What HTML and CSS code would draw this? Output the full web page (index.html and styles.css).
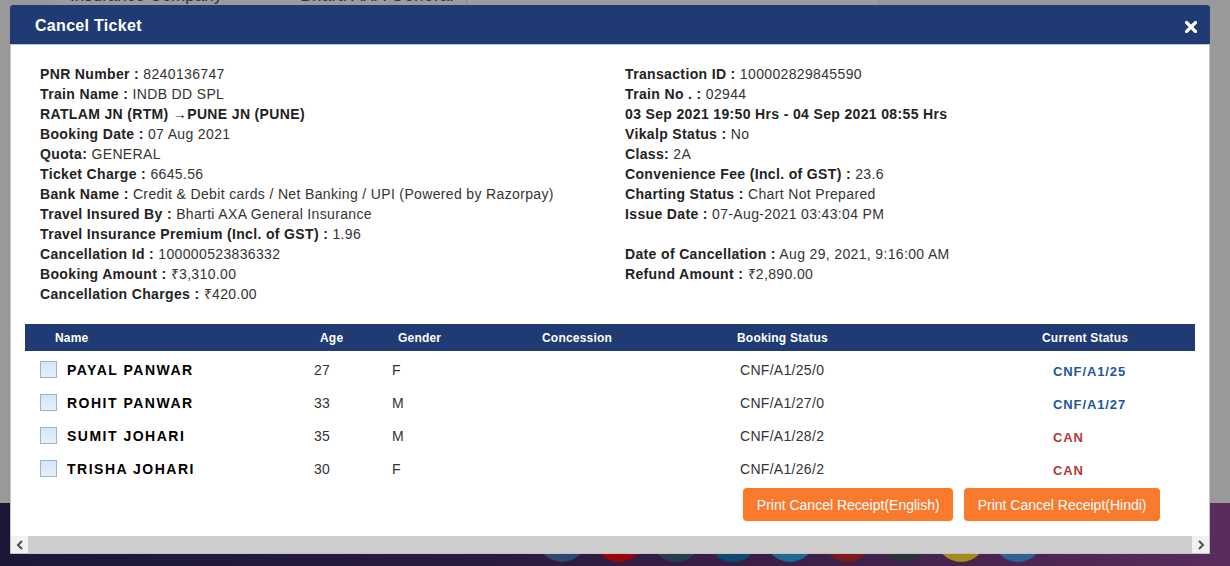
FILE: index.html
```html
<!DOCTYPE html>
<html>
<head>
<meta charset="utf-8">
<title>Cancel Ticket</title>
<link rel="stylesheet" href="styles.css">
</head>
<body>
<div class="backdrop">
  <div class="bg-top">
    <div class="bg-table">
      <div class="bg-cell bg-cell-a"><span>Insurance Company</span><span class="bg-val">Bharti AXA General</span></div>
      <div class="bg-cell bg-cell-b"></div>
    </div>
  </div>
  <div class="bg-bottom">
    <div class="circles">
      <span class="circle c1"></span><span class="circle c2"></span><span class="circle c3"></span>
      <span class="circle c4"></span><span class="circle c5"></span><span class="circle c6"></span>
      <span class="circle c7"></span><span class="circle c8"></span><span class="circle c9"></span>
    </div>
  </div>
</div>

<div class="modal">
  <div class="modal-header">
    <h4 class="modal-title">Cancel Ticket</h4>
    <button class="close" aria-label="Close">
      <svg width="12" height="12" viewBox="0 0 12 12"><path d="M1.5 1.5 L10.5 10.5 M10.5 1.5 L1.5 10.5" stroke="#fff" stroke-width="3.2" stroke-linecap="square"/></svg>
    </button>
  </div>
  <div class="modal-body">
    <div class="details">
      <div class="col">
        <div class="line"><b>PNR Number :</b> 8240136747</div>
        <div class="line"><b>Train Name :</b> INDB DD SPL</div>
        <div class="line"><b>RATLAM JN (RTM) →PUNE JN (PUNE)</b></div>
        <div class="line"><b>Booking Date :</b> 07 Aug 2021</div>
        <div class="line"><b>Quota:</b> GENERAL</div>
        <div class="line"><b>Ticket Charge :</b> 6645.56</div>
        <div class="line"><b>Bank Name :</b> Credit &amp; Debit cards / Net Banking / UPI (Powered by Razorpay)</div>
        <div class="line"><b>Travel Insured By :</b> Bharti AXA General Insurance</div>
        <div class="line"><b>Travel Insurance Premium (Incl. of GST) :</b> 1.96</div>
        <div class="line"><b>Cancellation Id :</b> 100000523836332</div>
        <div class="line"><b>Booking Amount :</b> ₹3,310.00</div>
        <div class="line"><b>Cancellation Charges :</b> ₹420.00</div>
      </div>
      <div class="col">
        <div class="line"><b>Transaction ID :</b> 100002829845590</div>
        <div class="line"><b>Train No . :</b> 02944</div>
        <div class="line"><b>03 Sep 2021 19:50 Hrs - 04 Sep 2021 08:55 Hrs</b></div>
        <div class="line"><b>Vikalp Status :</b> No</div>
        <div class="line"><b>Class:</b> 2A</div>
        <div class="line"><b>Convenience Fee (Incl. of GST) :</b> 23.6</div>
        <div class="line"><b>Charting Status :</b> Chart Not Prepared</div>
        <div class="line"><b>Issue Date :</b> 07-Aug-2021 03:43:04 PM</div>
        <div class="line"></div>
        <div class="line"><b>Date of Cancellation :</b> Aug 29, 2021, 9:16:00 AM</div>
        <div class="line"><b>Refund Amount :</b> ₹2,890.00</div>
      </div>
    </div>

    <div class="ptable">
      <div class="prow phead">
        <div class="h-name">Name</div>
        <div class="h-age">Age</div>
        <div class="h-gender">Gender</div>
        <div class="h-conc">Concession</div>
        <div class="h-book">Booking Status</div>
        <div class="h-cur">Current Status</div>
      </div>
      <div class="pbody">
        <div class="prow">
          <div class="d-name"><span class="chk"></span><span class="pname">PAYAL PANWAR</span></div>
          <div class="d-age">27</div><div class="d-gender">F</div><div class="d-conc"></div>
          <div class="d-book">CNF/A1/25/0</div><div class="d-cur cnf">CNF/A1/25</div>
        </div>
        <div class="prow">
          <div class="d-name"><span class="chk"></span><span class="pname">ROHIT PANWAR</span></div>
          <div class="d-age">33</div><div class="d-gender">M</div><div class="d-conc"></div>
          <div class="d-book">CNF/A1/27/0</div><div class="d-cur cnf">CNF/A1/27</div>
        </div>
        <div class="prow">
          <div class="d-name"><span class="chk"></span><span class="pname">SUMIT JOHARI</span></div>
          <div class="d-age">35</div><div class="d-gender">M</div><div class="d-conc"></div>
          <div class="d-book">CNF/A1/28/2</div><div class="d-cur can">CAN</div>
        </div>
        <div class="prow">
          <div class="d-name"><span class="chk"></span><span class="pname">TRISHA JOHARI</span></div>
          <div class="d-age">30</div><div class="d-gender">F</div><div class="d-conc"></div>
          <div class="d-book">CNF/A1/26/2</div><div class="d-cur can">CAN</div>
        </div>
      </div>
    </div>

    <div class="actions">
      <button class="btn">Print Cancel Receipt(English)</button>
      <button class="btn">Print Cancel Receipt(Hindi)</button>
    </div>
  </div>
  <div class="hscroll">
    <span class="sb-btn">
      <svg width="8" height="10" viewBox="0 0 8 10"><path d="M6 1 L2 5 L6 9" fill="none" stroke="#505050" stroke-width="2"/></svg>
    </span>
    <span class="sb-track"></span>
    <span class="sb-btn">
      <svg width="8" height="10" viewBox="0 0 8 10"><path d="M2 1 L6 5 L2 9" fill="none" stroke="#505050" stroke-width="2"/></svg>
    </span>
  </div>
</div>
</body>
</html>
```

FILE: styles.css
```css
* { box-sizing: border-box; }

html, body {
  margin: 0;
  padding: 0;
  width: 1230px;
  height: 566px;
  overflow: hidden;
  font-family: "Liberation Sans", Arial, sans-serif;
}

/* ---------- page behind the dialog ---------- */
.backdrop {
  display: flex;
  flex-direction: column;
  height: 566px;
}
.bg-top {
  height: 503px;
  background: #999999;
  overflow: hidden;
}
.bg-table {
  display: flex;
  margin: -17px 0 0 55px;
  width: 824px;
  height: 40px;
}
.bg-cell {
  height: 40px;
  background: #9c9c9c;
  border-right: 1px solid #8a8a8a;
  font-size: 17px;
  line-height: 26px;
  color: #303048;
}
.bg-cell-a {
  width: 412px;
  display: flex;
  gap: 78px;
  padding-left: 15px;
}
.bg-val { letter-spacing: 0.4px; }
.bg-cell-b { width: 412px; }

.bg-bottom {
  flex: 1;
  background: linear-gradient(90deg, #1b1836 0%, #2a1a3e 40%, #3f2149 70%, #5a2c5b 100%);
  overflow: hidden;
}
.circles {
  display: flex;
  gap: 7px;
  margin: 9px 0 0 537px;
}
.circle {
  width: 50px;
  height: 50px;
  border-radius: 50%;
  flex: none;
}
.c1 { background: #2e4674; }
.c2 { background: #9a0406; }
.c3 { background: #22404f; }
.c4 { background: #0b4b74; }
.c5 { background: #1c6a93; }
.c6 { background: #791a1c; }
.c7 { background: #26343d; }
.c8 { background: #a7891d; }
.c9 { background: #2f6396; }

/* ---------- dialog ---------- */
.modal {
  position: absolute;
  top: 5px;
  left: 10px;
  width: 1200px;
  height: 549px;
  background: #fff;
  border: 1px solid #c4c4c4;
  border-radius: 3px 3px 0 0;
  display: flex;
  flex-direction: column;
}
.modal-header {
  height: 40px;
  flex: none;
  background: #203b74;
  border-bottom: 1px solid #b9c3d6;
  display: flex;
  align-items: center;
  justify-content: space-between;
  padding: 2px 13px 0 25px;
  margin: -1px -1px 0 -1px;
  border-radius: 3px 3px 0 0;
}
.modal-title {
  margin: 0;
  color: #fff;
  font-size: 16px;
  font-weight: bold;
  letter-spacing: 0.3px;
}
.close {
  background: none;
  border: 0;
  padding: 0;
  width: 12px;
  height: 12px;
  margin-top: 2px;
  display: flex;
}

.modal-body {
  flex: 1;
  padding: 19px 14px 0 14px;
}

.details {
  display: grid;
  grid-template-columns: 585px 1fr;
  padding-left: 15px;
  font-size: 14px;
  letter-spacing: 0.35px;
  color: #333;
}
.line {
  height: 20px;
  line-height: 20px;
  white-space: nowrap;
}
.line b {
  color: #222;
}

/* ---------- passenger table ---------- */
.ptable {
  margin-top: 20px;
  width: 1170px;
}
.prow {
  display: grid;
  grid-template-columns: 289px 78px 150px 195px 305px 153px;
  align-items: center;
}
.phead {
  height: 27px;
  background: #203b74;
  color: #fff;
  font-size: 12px;
  font-weight: bold;
  letter-spacing: 0.2px;
}
.h-name { padding-left: 30px; }
.h-age, .h-gender { padding-left: 6px; }
.pbody { padding-top: 2px; }
.pbody .prow {
  height: 33px;
  font-size: 14px;
  letter-spacing: 0.3px;
  color: #333;
}
.d-name {
  display: flex;
  align-items: center;
  padding-left: 15px;
  gap: 10px;
}
.chk {
  width: 17px;
  height: 17px;
  border: 1px solid #9bb3cb;
  background: linear-gradient(180deg, #d6e6f6 0%, #e4effa 100%);
  flex: none;
}
.pname {
  font-weight: bold;
  color: #000;
  font-size: 14px;
  letter-spacing: 1.5px;
}
.d-book { padding-left: 3px; }
.d-cur {
  padding-left: 11px;
  font-weight: bold;
  font-size: 13px;
  letter-spacing: 0.9px;
  padding-top: 4px;
}
.cnf { color: #1a56a3; }
.can { color: #b03a3a; }

.actions {
  display: flex;
  justify-content: flex-end;
  gap: 11px;
  padding-right: 35px;
  margin-top: 3px;
}
.btn {
  height: 33px;
  padding: 0 13.5px;
  background: #f97a2d;
  color: #fff;
  border: 0;
  border-radius: 4px;
  font-family: "Liberation Sans", Arial, sans-serif;
  font-size: 14px;
}

/* ---------- horizontal scrollbar ---------- */
.hscroll {
  height: 17px;
  flex: none;
  display: flex;
  background: #cdcdcd;
}
.sb-btn {
  width: 17px;
  height: 17px;
  background: #f1f1f1;
  display: flex;
  align-items: center;
  justify-content: center;
}
.sb-track { flex: 1; }
```
